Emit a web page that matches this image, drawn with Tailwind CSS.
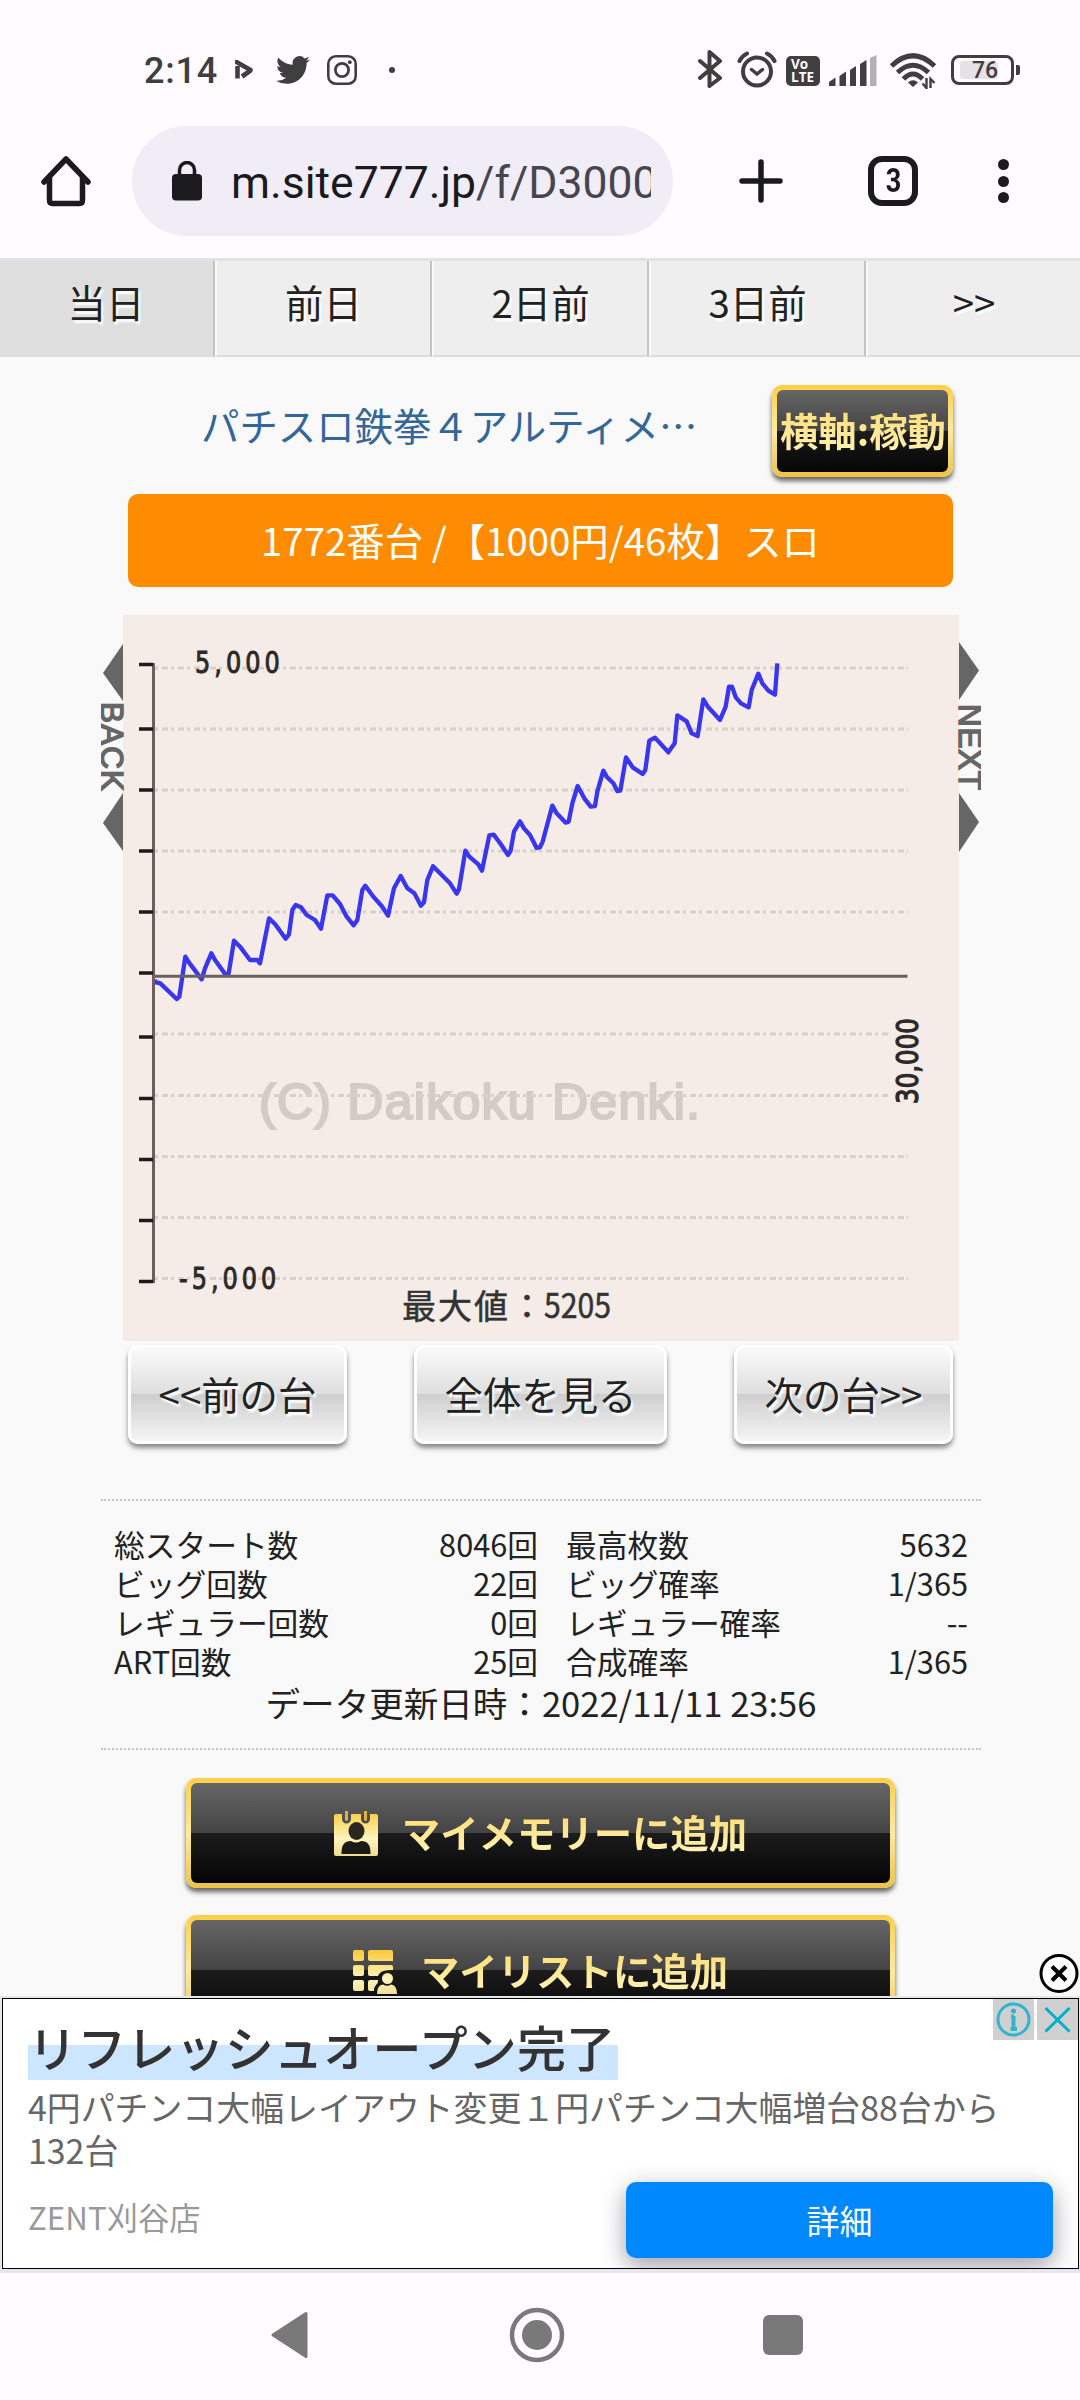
<!DOCTYPE html>
<html lang="ja">
<head>
  <meta charset="UTF-8">
  <title>パチスロ鉄拳４アルティメットデビルver.</title>
  <script src="https://cdn.jsdelivr.net/npm/@tailwindcss/browser@4"></script>
</head>
<body class="w-[1080px] h-[2400px] overflow-hidden bg-[#fffbff] text-[#222] font-['Noto_Sans_CJK_JP',sans-serif]">

  <!-- ステータスバー -->
  <div class="h-[126px] flex items-start pt-[49px] font-[Roboto,sans-serif] text-[#3f3f3f]">
    <div class="ml-[144px] w-[91px] text-[36px] leading-[44px] tracking-[0.8px] font-medium">2:14</div>
    <svg class="w-[18px] h-[20px] mt-[11px]" viewBox="0 0 18 20" fill="none" stroke="#3f3f3f" stroke-width="4.600">
      <path d="M1.500 2 L15.500 10" stroke-linecap="round"/>
      <path d="M2.500 6 V18.500"/>
      <path d="M7 16.500 L15.500 10.500"/>
    </svg>
    <svg class="w-[34px] h-[34px] mt-[4px] ml-[23px]" viewBox="0 0 24 24" fill="#3f3f3f">
      <path d="M23.953 4.570a10 10 0 01-2.825.775 4.958 4.958 0 002.163-2.723c-.951.555-2.005.959-3.127 1.184a4.920 4.920 0 00-8.384 4.482C7.690 8.095 4.067 6.130 1.640 3.162a4.822 4.822 0 00-.666 2.475c0 1.710.87 3.213 2.188 4.096a4.904 4.904 0 01-2.228-.616v.060a4.923 4.923 0 003.946 4.827 4.996 4.996 0 01-2.212.085 4.936 4.936 0 004.604 3.417 9.867 9.867 0 01-6.102 2.105c-.390 0-.779-.023-1.170-.067a13.995 13.995 0 007.557 2.209c9.053 0 13.998-7.496 13.998-13.985 0-.210 0-.420-.015-.630A9.935 9.935 0 0024 4.590z"/>
    </svg>
    <svg class="w-[30px] h-[30px] mt-[6px] ml-[17px]" viewBox="0 0 30 30" fill="none" stroke="#3f3f3f">
      <rect x="1.300" y="1.300" width="27.400" height="27.400" rx="7.500" stroke-width="2.600"/>
      <circle cx="15" cy="15" r="6.600" stroke-width="2.800"/>
      <circle cx="22.800" cy="7.200" r="1.900" fill="#3f3f3f" stroke="none"/>
    </svg>
    <div class="w-[6px] h-[6px] rounded-full bg-[#3f3f3f] mt-[18px] ml-[32px]"></div>

    <svg class="w-[24px] h-[40px] ml-[303px]" viewBox="0 0 24 40" fill="none" stroke="#3f3f3f" stroke-width="4" stroke-linejoin="round" stroke-linecap="round">
      <path d="M2 12 L22 29 L11.500 37 V3 L22 12 L2 29"/>
    </svg>
    <svg class="w-[40px] h-[40px] ml-[15px]" viewBox="0 0 40 40" fill="none" stroke="#3f3f3f" stroke-width="4" stroke-linecap="round">
      <circle cx="20" cy="22.500" r="14"/>
      <path d="M14.500 20.500 L20 25 L25.500 20.500" stroke-width="3.500"/>
      <path d="M2.500 12 Q5 7 10 4.500 M37.500 12 Q35 7 30 4.500"/>
    </svg>
    <div class="w-[34px] h-[30px] rounded-[5px] bg-[#3f3f3f] text-[#fffbff] ml-[9px] mt-[7px] font-bold text-[13.500px] leading-[12.500px] pt-[2px] pl-[5px] font-['Open_Sans',sans-serif]">Vo<br>LTE</div>
    <svg class="w-[48px] h-[31px] ml-[9px] mt-[6px]" viewBox="0 0 48 31" fill="#3f3f3f">
      <path d="M0 31 V27 L6.500 22.500 V31Z M10.500 31 V21 L17 16.500 V31Z M21 31 V15 L27 11 V31Z M31 31 V9 L37.500 5 V31Z"/>
      <path d="M41 31 V3 L47.500 0 V31Z" fill="#b3b0b3"/>
    </svg>
    <svg class="w-[46px] h-[36px] ml-[13px] mt-[4px]" viewBox="0 0 46 36" fill="none" stroke="#3f3f3f" stroke-width="5">
      <path d="M1.500 13 Q23 -7.500 44.500 13"/>
      <path d="M7.500 19.500 Q23 5 38.500 19.500"/>
      <path d="M13.500 26 Q23 16 32.500 26"/>
      <path d="M18 29.500 Q23 25 28 29.500 L23 34Z" fill="#3f3f3f" stroke="none"/>
      <path d="M36.500 25 V35 L32.500 30.500 M40.500 35 V26 L44.500 30" stroke-width="2.400"/>
    </svg>
    <div class="relative w-[63px] h-[30px] border-[3px] border-[#3f3f3f] rounded-[8px] ml-[15px] mt-[6px]">
      <div class="w-[38px] h-[18px] bg-[#e5e1e5] rounded-[3px] mt-[3px] ml-[6px]"></div>
      <div class="absolute left-[18px] top-0 text-[23px] leading-[25px] font-medium">76</div>
    </div>
    <div class="w-[4px] h-[10px] rounded-r-[2px] bg-[#3f3f3f] ml-[2px] mt-[16px]"></div>
  </div>

  <!-- アドレスバー -->
  <div class="h-[132px] flex items-start font-[Roboto,sans-serif] text-[#1b1b1f]">
    <svg class="w-[50px] h-[52px] ml-[41px] mt-[29px]" viewBox="0 0 50 52" fill="none" stroke="#1b1b1f" stroke-width="5.500" stroke-linejoin="round" stroke-linecap="round">
      <path d="M3 27 L25 4 L47 27 M8.500 22 V45 Q8.500 48.500 11.500 48.500 H38.500 Q41.500 48.500 41.500 45 V22"/>
    </svg>
    <div class="w-[541px] h-[110px] rounded-full bg-[#f0edf7] ml-[41px] flex items-center">
      <svg class="w-[30px] h-[40px] ml-[40px]" viewBox="0 0 30 40">
        <rect x="0" y="13" width="30" height="26.500" rx="4" fill="#1b1b1f"/>
        <path d="M7.500 14 V9 A7.500 7.500 0 0 1 22.500 9 V14" fill="none" stroke="#1b1b1f" stroke-width="3.500"/>
      </svg>
      <div class="w-[420px] ml-[29px] pt-[4px] text-[44.500px] leading-[56px] whitespace-nowrap overflow-hidden">m.site777.jp<span class="text-[#47464f]">/f/D3000</span></div>
    </div>
    <svg class="w-[44px] h-[44px] ml-[66px] mt-[33px]" viewBox="0 0 44 44" stroke="#1b1b1f" stroke-width="5.500" stroke-linecap="round">
      <path d="M22 3 V41 M3 22 H41"/>
    </svg>
    <div class="w-[50px] h-[50px] border-[6px] border-[#1b1b1f] rounded-[14px] ml-[85px] mt-[30px] text-center text-[33px] leading-[38px] font-bold"><span class="inline-block scale-x-[.82]">3</span></div>
    <div class="flex flex-col gap-[5.500px] ml-[80px] mt-[33px]">
      <div class="w-[11px] h-[11px] rounded-full bg-[#1b1b1f]"></div>
      <div class="w-[11px] h-[11px] rounded-full bg-[#1b1b1f]"></div>
      <div class="w-[11px] h-[11px] rounded-full bg-[#1b1b1f]"></div>
    </div>
  </div>

  <!-- 日付タブ -->
  <div class="h-[99px] border-t-[3px] border-[#e1e1e9] grid grid-cols-[215px_217px_217px_217px_214px] text-center text-[38.400px] leading-[80px] bg-[#eee] [text-shadow:2px_3px_2px_#fff]">
    <div class="bg-[#dedede] border-r-2 border-[#c4c4c4] pr-px">当日</div>
    <div class="border-r-2 border-r-[#c4c4c4] border-b-2 border-b-[#dcdcdc] border-l-2 border-l-[#fafafa]">前日</div>
    <div class="border-r-2 border-r-[#c4c4c4] border-b-2 border-b-[#dcdcdc] border-l-2 border-l-[#fafafa]">2日前</div>
    <div class="border-r-2 border-r-[#c4c4c4] border-b-2 border-b-[#dcdcdc] border-l-2 border-l-[#fafafa]">3日前</div>
    <div class="border-b-2 border-b-[#dcdcdc] border-l-2 border-l-[#fafafa]">&gt;&gt;</div>
  </div>

  <!-- 本文 -->
  <div class="relative h-[1639px] overflow-hidden bg-[#f9f9f9] pt-[28px] pl-[101px] pr-[99px]">

    <div class="flex h-[92px] pl-[100px]">
      <div class="w-[571px] text-[38.400px] leading-[79px] text-[#336699] whitespace-nowrap">パチスロ鉄拳４アルティメ…</div>
      <div class="w-[181px] h-[92px] rounded-[10px] p-[5px] bg-linear-to-b from-[#fbcf45] via-[#fdeb9c] to-[#edc244] shadow-[0_4px_5px_rgba(0,0,0,0.6)]">
        <div class="h-[82px] rounded-[6px] bg-[linear-gradient(#666,#444_50%,#1c1c1c_50%,#050505)] flex justify-center pl-px">
          <span class="whitespace-nowrap text-[38.400px] leading-[78px] font-bold text-transparent bg-clip-text bg-linear-to-b from-[#fdd75c] to-[#fff8c4]">横軸:稼動</span>
        </div>
      </div>
    </div>

    <div class="mt-[17px] ml-[27px] mr-[28px] h-[93px] rounded-[10px] bg-[#ff8c00] text-white text-center text-[38.400px] leading-[91px] whitespace-nowrap">1772番台 /【1000円/46枚】スロ</div>

    <!-- スランプグラフ -->
    <svg class="w-[880px] h-[726px] mt-[28px]" viewBox="101 615 880 726">
      <rect x="123" y="615" width="836" height="726" fill="#f5ece7"/>
      <g fill="#666">
        <path d="M103 673 L123 644 V701Z M103 823 L123 793 V851Z"/>
        <path d="M979 670.500 L959 642 V700Z M979 822 L959 793 V852Z"/>
        <text transform="translate(101 702) rotate(90)" font-family="Liberation Sans, sans-serif" font-size="31.500" textLength="89" stroke="#666" stroke-width="1.500">BACK</text>
        <text transform="translate(959 704) rotate(90)" font-family="Liberation Sans, sans-serif" font-size="31.500" textLength="86" stroke="#666" stroke-width="1.500">NEXT</text>
      </g>
      <text x="259" y="1119" font-family="Liberation Sans, sans-serif" font-size="50" textLength="441" fill="#d4cbc7" stroke="#d4cbc7" stroke-width="2.200">(C) Daikoku Denki.</text>
      <path d="M155 668H908 M155 729H908 M155 790H908 M155 851H908 M155 912H908 M155 1034H890 M155 1095.500H890 M155 1156.500H908 M155 1217.500H908 M155 1278.500H908" stroke="#d8d0cc" stroke-width="2.800" stroke-dasharray="3 4 6 3"/>
      <polyline transform="translate(80 600) scale(.33333)" fill="none" stroke="#3a36f0" stroke-width="13" stroke-linejoin="round" points="
        224,1140 228,1147 241,1150 290,1197 298,1190 316,1070 325,1085 365,1138 375,1105 394,1060 405,1080 436,1123 446,1120 462,1022
        480,1040 510,1080 532,1080 540,1090 567,955 585,972 617,1016 627,1003 637,930 647,915 663,922 680,945 705,960 723,986
        742,886 758,886 780,912 800,950 821,976 832,960 847,870 856,857 880,890 905,918 924,947 942,865 962,828 982,865 1003,880
        1023,917 1032,907 1042,840 1059,799 1110,850 1130,881 1137,868 1156,752 1168,770 1195,793 1206,812 1228,706 1241,704
        1262,732 1284,765 1292,752 1302,695 1320,664 1332,685 1350,705 1370,744 1380,742 1388,725 1417,617 1430,640 1457,668
        1466,665 1477,610 1493,558 1513,595 1532,620 1545,618 1552,575 1570,512 1580,530 1600,550 1612,573 1621,572 1638,472
        1658,502 1688,522 1696,510 1708,422 1725,413 1765,457 1784,430 1792,346 1820,364 1835,400 1853,408 1870,298 1885,322
        1920,360 1937,320 1947,260 1956,260 1968,293 1983,310 2006,322 2015,270 2035,221 2047,250 2065,272 2085,284 2092,190"/>
      <path d="M153.500 663 V1283 M153 976.300H907.500" stroke="#6b5f60" stroke-width="3" fill="none"/>
      <path d="M139 664.500h14 M139 729h14 M139 790h14 M139 851h14 M139 912h14 M139 973h14 M139 1037h14 M139 1098.500h14 M139 1159.500h14 M139 1220.500h14 M139 1281.500h14" stroke="#1d1a1a" stroke-width="3.500"/>
      <g fill="#2c2929" stroke="#2c2929" stroke-width="1" font-family="DejaVu Sans, sans-serif">
        <!-- 縦軸の目盛り：細めの数字を広めの字間で -->
        <text transform="translate(195 672.500) scale(.8 1)" font-size="30" letter-spacing="5">5,000</text>
        <text transform="translate(179 1289) scale(.8 1)" font-size="30" letter-spacing="5">-5,000</text>
        <text transform="translate(917.500 1104) rotate(-90)" font-size="31" textLength="86" lengthAdjust="spacingAndGlyphs" stroke-width="1.300">30,000</text>
      </g>
      <g fill="#333" stroke="#333" stroke-width=".5" font-family="Noto Sans CJK JP, sans-serif" font-size="34">
        <text x="402" y="1319" textLength="142">最大値：</text>
        <text x="544" y="1318" textLength="67" lengthAdjust="spacingAndGlyphs">5205</text>
      </g>
    </svg>

    <div class="flex justify-between ml-[27px] mr-[28px] mt-[4px] text-center text-[38.400px] leading-[90px] whitespace-nowrap [text-shadow:2px_3px_2px_#fff]">
      <div class="w-[219px] h-[99px] rounded-[10px] border-[3px] border-white bg-[linear-gradient(#fafafa,#dedede_50%,#cecece_50%,#f5f5f5)] shadow-[0_4px_5px_rgba(0,0,0,0.45)]">&lt;&lt;前の台</div>
      <div class="w-[253px] h-[99px] rounded-[10px] border-[3px] border-white bg-[linear-gradient(#fafafa,#dedede_50%,#cecece_50%,#f5f5f5)] shadow-[0_4px_5px_rgba(0,0,0,0.45)]">全体を見る</div>
      <div class="w-[219px] h-[99px] rounded-[10px] border-[3px] border-white bg-[linear-gradient(#fafafa,#dedede_50%,#cecece_50%,#f5f5f5)] shadow-[0_4px_5px_rgba(0,0,0,0.45)]">次の台&gt;&gt;</div>
    </div>

    <!-- データ表 -->
    <div class="mt-[55px] h-[251px] border-y-2 border-dotted border-[#c4c4c4] pt-[23px] px-[13px]">
      <div class="grid grid-cols-[270px_154px_281px_auto] text-[30.720px] leading-[39px] whitespace-nowrap">
        <div>総スタート数</div><div class="text-right">8046回</div><div class="pl-[28px]">最高枚数</div><div class="text-right">5632</div>
        <div>ビッグ回数</div><div class="text-right">22回</div><div class="pl-[28px]">ビッグ確率</div><div class="text-right">1/365</div>
        <div>レギュラー回数</div><div class="text-right">0回</div><div class="pl-[28px]">レギュラー確率</div><div class="text-right">--</div>
        <div>ART回数</div><div class="text-right">25回</div><div class="pl-[28px]">合成確率</div><div class="text-right">1/365</div>
      </div>
      <div class="text-center text-[34.560px] leading-[44px]">データ更新日時：2022/11/11 23:56</div>
    </div>

    <!-- 追加ボタン -->
    <div class="mt-[28px] ml-[85px] mr-[86px] h-[110px] rounded-[10px] p-[5px] bg-linear-to-b from-[#fbcf45] via-[#fdeb9c] to-[#edc244] shadow-[0_4px_5px_rgba(0,0,0,0.6)]">
      <div class="h-[100px] rounded-[6px] bg-[linear-gradient(#666,#444_50%,#1c1c1c_50%,#050505)] flex justify-center items-center gap-[24px]">
        <svg class="w-[44px] h-[46px]" viewBox="0 0 44 46">
          <defs><linearGradient id="gold" gradientUnits="userSpaceOnUse" x1="0" y1="2" x2="0" y2="46"><stop offset="0" stop-color="#fbcc40"/><stop offset=".6" stop-color="#fff4bc"/><stop offset="1" stop-color="#ecdc94"/></linearGradient></defs>
          <path d="M2 4 H8 V9 A4.500 4.500 0 0 0 17 9 V4 H27 V9 A4.500 4.500 0 0 0 36 9 V4 H42 Q44 4 44 6 V44 Q44 46 42 46 H2 Q0 46 0 44 V6 Q0 4 2 4Z" fill="url(#gold)"/>
          <path d="M11 1 h3 v9 q-1.500 2 -3 0Z M30 1 h3 v9 q-1.500 2 -3 0Z" fill="#d9b240"/>
          <ellipse cx="22.500" cy="21" rx="8" ry="9" fill="#2a2720"/>
          <path d="M7.500 44 Q7 31 17 31 Q22 34 27 31 Q37 31 36.500 44Z" fill="#1c1a14"/>
        </svg>
        <span class="text-[38.400px] leading-[56px] pb-[4px] font-bold text-transparent bg-clip-text bg-linear-to-b from-[#fdd75c] to-[#fff8c4]">マイメモリーに追加</span>
      </div>
    </div>
    <div class="mt-[27px] ml-[85px] mr-[86px] h-[110px] rounded-[10px] p-[5px] bg-linear-to-b from-[#fbcf45] via-[#fdeb9c] to-[#edc244] shadow-[0_4px_5px_rgba(0,0,0,0.6)]">
      <div class="h-[100px] rounded-[6px] bg-[linear-gradient(#666,#444_50%,#1c1c1c_50%,#050505)] flex justify-center items-center gap-[24px]">
        <svg class="w-[44px] h-[44px] mt-[4px]" viewBox="0 0 44 44" fill="url(#gold)">
          <path d="M2 0H9Q11 0 11 2V9Q11 11 9 11H2Q0 11 0 9V2Q0 0 2 0Z M17 0H38Q40 0 40 2V11H17Q15 11 15 9V2Q15 0 17 0Z"/>
          <path d="M2 15H9Q11 15 11 17V24Q11 26 9 26H2Q0 26 0 24V17Q0 15 2 15Z M17 15H38Q40 15 40 17V20Q27 19 25 26H17Q15 26 15 24V17Q15 15 17 15Z"/>
          <path d="M2 30H9Q11 30 11 32V39Q11 41 9 41H2Q0 41 0 39V32Q0 30 2 30Z M17 30H25Q25.500 33 23 35Q21 37 21 41H17Q15 41 15 39V32Q15 30 17 30Z"/>
          <circle cx="34.500" cy="28.500" r="5.500"/>
          <path d="M24 44 Q24 35 30 34.500 Q34 37 38 34.500 Q44 35 44 44Z"/>
        </svg>
        <span class="text-[38.400px] leading-[56px] pb-[3px] font-bold text-transparent bg-clip-text bg-linear-to-b from-[#fdd75c] to-[#fff8c4]">マイリストに追加</span>
      </div>
    </div>

    <svg class="absolute right-[1px] bottom-[2px] w-[40px] h-[41px]" viewBox="0 0 40 41" fill="#fff" stroke="#000">
      <circle cx="20" cy="20.500" r="18" stroke-width="3"/>
      <path d="M13 13.500 L27 27.500 M27 13.500 L13 27.500" stroke-width="4"/>
    </svg>
  </div>

  <!-- 広告 -->
  <div class="h-[277px] bg-[#e6e6ec] pt-[2px] pl-[2px] pr-px">
    <div class="relative h-[271px] border border-black bg-white overflow-hidden flex flex-col pl-[25px] pr-[25px]">
      <div class="absolute right-0 top-0 flex gap-[3px]">
        <div class="w-[41px] h-[41px] bg-[#d0d0d0]">
          <svg class="w-[41px] h-[41px]" viewBox="0 0 41 41" fill="none" stroke="#2fb5cf">
            <circle cx="20.500" cy="20.500" r="15.500" stroke-width="3"/>
            <path d="M20.500 17 V31 M18 17.500 H21 M17.500 30 H24" stroke-width="4"/>
            <circle cx="20.500" cy="12" r="2.500" fill="#2fb5cf" stroke="none"/>
          </svg>
        </div>
        <div class="w-[41px] h-[41px] bg-[#d0d0d0]">
          <svg class="w-[41px] h-[41px]" viewBox="0 0 41 41" fill="none" stroke="#00aecd" stroke-width="3">
            <path d="M8.500 9 L32.500 32.500 M32.500 9 L8.500 32.500"/>
          </svg>
        </div>
      </div>
      <div class="self-start mt-[11px] h-[70px] w-[590px] text-[49px] tracking-[0.2px] leading-[72px] font-medium text-[#333] whitespace-nowrap bg-[linear-gradient(transparent_50%,#cde6ff_50%)]">リフレッシュオープン完了</div>
      <div class="mt-[5px] text-[33.900px] leading-[43px] text-[#666] whitespace-nowrap">4円パチンコ大幅レイアウト変更１円パチンコ大幅増台88台から<br>132台</div>
      <div class="flex justify-between items-start mt-[11px]">
        <div class="text-[31.300px] leading-[70px] text-[#999]">ZENT刈谷店</div>
        <div class="w-[427px] h-[76px] rounded-[10px] bg-[#08f] text-white text-center text-[33px] leading-[76px] shadow-[0_8px_24px_rgba(40,40,60,0.45)]">詳細</div>
      </div>
    </div>
  </div>

  <!-- ナビゲーションバー -->
  <div class="h-[124px] flex items-center">
    <svg class="w-[37px] h-[48px] ml-[271px]" viewBox="0 0 37 48" fill="#797979" stroke="#797979" stroke-width="3" stroke-linejoin="round">
      <path d="M2 24 L35 2.500 V45.500Z"/>
    </svg>
    <svg class="w-[56px] h-[56px] ml-[201px]" viewBox="0 0 56 56" fill="none" stroke="#797979" stroke-width="4.500">
      <circle cx="28" cy="28" r="25"/>
      <circle cx="28" cy="28" r="15" fill="#797979" stroke="none"/>
    </svg>
    <div class="w-[40px] h-[40px] rounded-[6px] bg-[#797979] ml-[198px]"></div>
  </div>

</body>
</html>
